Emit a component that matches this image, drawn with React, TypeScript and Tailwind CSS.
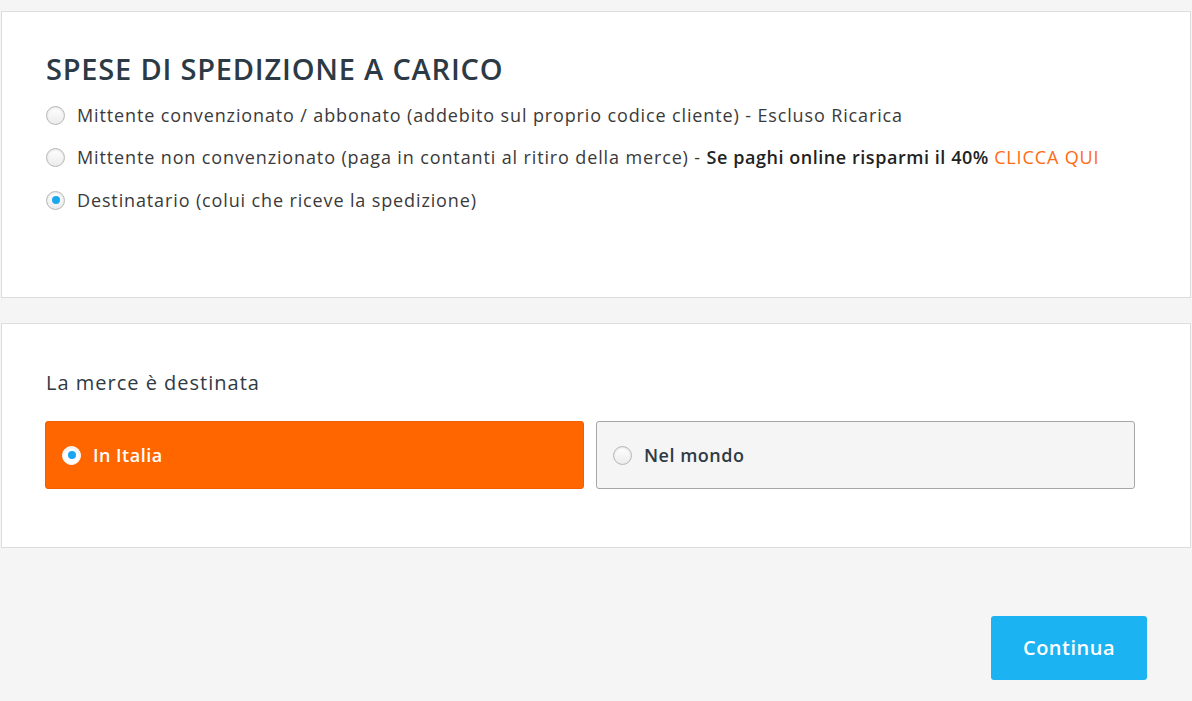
import { useState } from 'react';

const font = { fontFamily: '"Open Sans", Lato, Arial, sans-serif' };

function Radio({ checked, onDark }: { checked: boolean; onDark?: boolean }) {
  return (
    <span
      className={`flex items-center justify-center w-[19px] h-[19px] rounded-full shrink-0 border ${
        onDark ? 'border-white bg-white' : 'border-[#b8b8b8] bg-gradient-to-b from-white to-[#ececec]'
      } shadow-[inset_0_1px_2px_rgba(0,0,0,0.12)]`}
    >
      {checked && <span className="w-[8px] h-[8px] rounded-full bg-[#1ba6f0]" />}
    </span>
  );
}

const payers = [
  { id: 'abbonato', label: 'Mittente convenzionato / abbonato (addebito sul proprio codice cliente) - Escluso Ricarica' },
  { id: 'contanti', label: 'Mittente non convenzionato (paga in contanti al ritiro della merce) - ', promo: true },
  { id: 'destinatario', label: 'Destinatario (colui che riceve la spedizione)' },
];

export default function App() {
  const [payer, setPayer] = useState('destinatario');
  const [dest, setDest] = useState('italia');

  return (
    <div className="min-h-screen bg-[#f5f5f5] flex flex-col pt-[11px]" style={font}>
      {/* SPESE */}
      <div className="ml-[1px] w-[1190px] h-[287px] bg-white border border-[#dddddd] pl-[44px] pt-[40px]">
        <h2 className="text-[29px] leading-[34px] font-semibold text-[#2c3a45] tracking-[0.8px]">SPESE DI SPEDIZIONE A CARICO</h2>
        <div className="mt-[8px] flex flex-col">
          {payers.map((p) => (
            <label key={p.id} onClick={() => setPayer(p.id)} className="h-[42.5px] flex items-center gap-[12px] cursor-pointer">
              <Radio checked={payer === p.id} />
              <span className="text-[18px] text-[#3a3a3a] tracking-[0.87px] whitespace-pre">
                {p.label}
                {p.promo && (
                  <>
                    <span className="font-semibold text-[#222] tracking-[0.55px]">Se paghi online risparmi il 40% </span>
                    <span className="text-[#ff6a13]">CLICCA QUI</span>
                  </>
                )}
              </span>
            </label>
          ))}
        </div>
      </div>

      {/* DESTINAZIONE */}
      <div className="mt-[25px] ml-[1px] w-[1190px] h-[225px] bg-white border border-[#dddddd] pl-[44px] pt-[47px]">
        <p className="text-[20px] leading-[24px] text-[#2f3b44] tracking-[1px]">La merce è destinata</p>
        <div className="-ml-[1px] mt-[26px] flex gap-[12px]">
          {[
            { id: 'italia', label: 'In Italia' },
            { id: 'mondo', label: 'Nel mondo' },
          ].map((o) => {
            const on = dest === o.id;
            return (
              <button
                key={o.id}
                onClick={() => setDest(o.id)}
                className={`w-[539px] h-[68px] rounded-[3px] border flex items-center gap-[12px] pl-[16px] text-[18px] font-semibold tracking-[0.5px] ${
                  on ? 'bg-[#ff6600] border-[#f06000] text-white' : 'bg-[#f5f5f5] border-[#a6a6a6] text-[#2f3b44]'
                }`}
              >
                <Radio checked={on} onDark={on} />
                {o.label}
              </button>
            );
          })}
        </div>
      </div>

      <button className="self-end mr-[45px] mt-[68px] w-[156px] h-[64px] rounded-[3px] bg-[#1cb3f3] text-white text-[20px] font-semibold tracking-[0.5px]">
        Continua
      </button>
    </div>
  );
}
